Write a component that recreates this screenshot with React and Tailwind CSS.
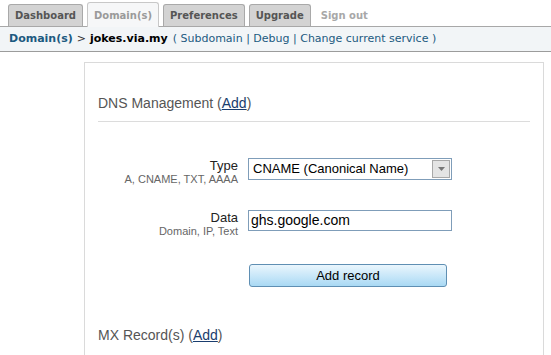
import React from 'react';

const tabFont = { fontFamily: '"DejaVu Sans", Verdana, sans-serif' };

const Tab = ({ label, active }) => (
  <div
    className={
      active
        ? 'h-[25px] px-[6px] flex items-center border border-b-0 border-[#c8c8c8] rounded-t-[3px] bg-[#f6f7f8] text-[#9a9a9a] text-[10px] font-bold -mb-px'
        : 'h-[22px] px-[6px] flex items-center border border-b-0 border-[#a9a9a9] rounded-t-[3px] bg-[#d3d3d3] text-[#555] text-[10px] font-bold'
    }
  >
    {label}
  </div>
);

const FieldLabel = ({ title, hint }) => (
  <div className="w-[150px] text-right pr-[10px] leading-none pt-[1px]">
    <div className="text-[13px] text-[#222]">{title}</div>
    <div className="text-[11px] text-[#666] mt-[2px]">{hint}</div>
  </div>
);

export default function App() {
  return (
    <div className="w-[551px] h-[355px] bg-white overflow-hidden" style={{ fontFamily: 'Arial, "Liberation Sans", sans-serif' }}>
      <div className="flex items-end gap-[4px] pl-[8px] pt-[3px] h-[27px] border-b border-[#a8a8a8]" style={tabFont}>
        <Tab label="Dashboard" />
        <Tab label="Domain(s)" active />
        <Tab label="Preferences" />
        <Tab label="Upgrade" />
        <div className="h-[22px] px-[6px] flex items-center text-[10px] font-bold text-[#a8a8a8]">Sign out</div>
      </div>

      <div className="h-[25px] flex items-center pl-[9px] bg-[#f2f5f7] border-b border-[#9c9c9c] text-[11px] text-[#1c5a80]" style={tabFont}>
        <span className="font-bold">Domain(s)</span>
        <span className="text-[#333] mx-[4px]">&gt;</span>
        <span className="font-bold text-black">jokes.via.my</span>
        <span className="ml-[5px]">( Subdomain | Debug | Change current service )</span>
      </div>

      <div className="ml-[84px] mr-[7px] mt-[10px] border border-[#dadada] border-b-0 h-[300px] px-[13px]">
        <div className="pt-[30px] pb-[7px] text-[14px] text-[#555] border-b border-[#dcdcdc]">
          DNS Management (<span className="text-[#1a3d6e] underline">Add</span>)
        </div>

        <div className="flex items-start h-[22px] mt-[36px]">
          <FieldLabel title="Type" hint="A, CNAME, TXT, AAAA" />
          <div className="w-[204px] h-[22px] border border-[#7f9db9] bg-white flex items-center justify-between pl-[4px] pr-[1px] text-[13px] text-black">
            <span>CNAME (Canonical Name)</span>
            <div className="w-[18px] h-[18px] bg-[#e4e4e4] border border-[#a8a8a8] flex items-center justify-center">
              <svg width="7" height="4" viewBox="0 0 7 4"><path d="M0 0h7L3.5 4z" fill="#777" /></svg>
            </div>
          </div>
        </div>

        <div className="flex items-start h-[21px] mt-[30px]">
          <FieldLabel title="Data" hint="Domain, IP, Text" />
          <div className="w-[204px] h-[21px] border border-[#7f9db9] bg-white flex items-center pl-[2px] text-[14px] text-black">
            ghs.google.com
          </div>
        </div>

        <div className="flex mt-[33px] pl-[151px]">
          <button className="w-[198px] h-[23px] rounded-[3px] border border-[#5f8fb3] bg-gradient-to-b from-[#eaf6fd] to-[#a9d9f4] text-[13px] text-black">
            Add record
          </button>
        </div>

        <div className="mt-[38px] pb-[10px] text-[14px] text-[#555] border-b border-[#dcdcdc]">
          MX Record(s) (<span className="text-[#1a3d6e] underline">Add</span>)
        </div>
      </div>
    </div>
  );
}
